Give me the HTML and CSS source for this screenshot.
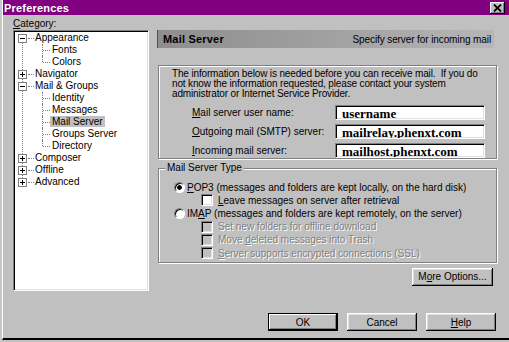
FILE: index.html
```html
<!DOCTYPE html>
<html>
<head>
<meta charset="utf-8">
<title>Preferences</title>
<link rel="stylesheet" href="styles.css">
</head>
<body>
<div class="win">
  <div class="frame">
    <div class="title">
      <span class="title-text">Preferences</span>
      <span class="close"><svg width="9" height="8" viewBox="0 0 9 8"><path d="M1 0.5 L8 7.5 M8 0.5 L1 7.5" stroke="#000" stroke-width="1.8" fill="none"/></svg></span>
    </div>
    <div class="main">
      <div class="left">
        <div class="cat"><u>C</u>ategory:</div>
        <div class="tree">
          <div class="roots">
            <div class="node"><span class="exp"></span><span class="dash"></span><span class="lbl">Appearance</span></div>
            <div class="kids">
              <div class="kid">Fonts</div>
              <div class="kid">Colors</div>
            </div>
            <div class="node"><span class="exp plus"></span><span class="dash"></span><span class="lbl">Navigator</span></div>
            <div class="node"><span class="exp"></span><span class="dash"></span><span class="lbl">Mail &amp; Groups</span></div>
            <div class="kids">
              <div class="kid">Identity</div>
              <div class="kid">Messages</div>
              <div class="kid"><span class="sel">Mail Server</span></div>
              <div class="kid">Groups Server</div>
              <div class="kid">Directory</div>
            </div>
            <div class="node"><span class="exp plus"></span><span class="dash"></span><span class="lbl">Composer</span></div>
            <div class="node"><span class="exp plus"></span><span class="dash"></span><span class="lbl">Offline</span></div>
            <div class="node"><span class="exp plus"></span><span class="dash"></span><span class="lbl">Advanced</span></div>
          </div>
        </div>
      </div>
      <div class="right">
        <div class="head"><b class="head-title">Mail Server</b><span class="head-sub">Specify server for incoming mail</span></div>
        <div class="group g1">
          <p class="info">The information below is needed before you can receive mail.&nbsp; If you do<br>not know the information requested, please contact your system<br>administrator or Internet Service Provider.</p>
          <div class="field"><span class="flabel"><u>M</u>ail server user name:</span><span class="input">username</span></div>
          <div class="field"><span class="flabel"><u>O</u>utgoing mail (SMTP) server:</span><span class="input">mailrelay.phenxt.com</span></div>
          <div class="field"><span class="flabel"><u>I</u>ncoming mail server:</span><span class="input">mailhost.phenxt.com</span></div>
        </div>
        <fieldset class="g2">
          <legend class="legend">Mail Server Type</legend>
          <div class="opts">
            <div class="opt"><span class="radio on"></span><span><u>P</u>OP3 (messages and folders are kept locally, on the hard disk)</span></div>
            <div class="opt sub"><span class="cb"></span><span><u>L</u>eave messages on server after retrieval</span></div>
            <div class="opt"><span class="radio"></span><span>IM<u>A</u>P (messages and folders are kept remotely, on the server)</span></div>
            <div class="opt sub dis"><span class="cb"></span><span>Set new folders for offline download</span></div>
            <div class="opt sub dis"><span class="cb"></span><span>Move <u>d</u>eleted messages into Trash</span></div>
            <div class="opt sub dis"><span class="cb"></span><span><u>S</u>erver supports encrypted connections (SSL)</span></div>
          </div>
        </fieldset>
        <div class="more-row"><button class="btn more">M<u>o</u>re Options...</button></div>
      </div>
    </div>
    <div class="footer">
      <button class="btn def">OK</button>
      <button class="btn">Cancel</button>
      <button class="btn"><u>H</u>elp</button>
    </div>
  </div>
</div>
</body>
</html>
```

FILE: styles.css
```css
* { box-sizing: border-box; }
html, body { margin: 0; padding: 0; background: #c0c0c0; }
body { font-family: "Liberation Sans", Arial, sans-serif; font-size: 10px; color: #000; }

.win { width: 509px; height: 342px; background: #c0c0c0; border-left: 2px solid #c8c8c8; overflow: hidden; }
.frame { height: 340px; border-bottom: 2px solid #000; border-left: 1px solid #fff; display: flex; flex-direction: column; }

.title { height: 15px; flex: none; background: #800080; display: flex; align-items: center; justify-content: space-between; padding: 0 4px 0 1px; }
.title-text { color: #fff; font-weight: bold; font-size: 11px; letter-spacing: 0.2px; }
.close { width: 15px; height: 12px; background: #c0c0c0; display: flex; align-items: center; justify-content: center;
  box-shadow: inset -1px -1px #000, inset 1px 1px #fff, inset -2px -2px #808080; }

.main { display: flex; gap: 8px; padding: 3px 0 0 10px; height: 276px; flex: none; }
.left { width: 136px; flex: none; }
.cat { height: 12px; line-height: 12px; }
.tree { height: 261px; background: #fff; border: 1px solid; border-color: #808080 #fff #fff #808080;
  box-shadow: inset 1px 1px #000, inset -1px -1px #dfdfdf; padding: 1px 0 0 1px; }
.roots { position: relative; }
.roots::before { content: ""; position: absolute; left: 7px; top: 6px; bottom: 6px; border-left: 1px dotted #808080; }
.node { display: flex; align-items: center; height: 12px; line-height: 12px; padding-left: 3px; position: relative; white-space: nowrap; }
.exp { width: 9px; height: 9px; border: 1px solid #808080; background: #fff; position: relative; flex: none; }
.exp::before { content: ""; position: absolute; left: 1px; right: 1px; top: 3px; height: 1px; background: #000; }
.exp.plus::after { content: ""; position: absolute; top: 1px; bottom: 1px; left: 3px; width: 1px; background: #000; }
.dash { width: 6px; border-top: 1px dotted #808080; margin: 0 1px; flex: none; }
.kid { height: 12px; line-height: 12px; padding-left: 37px; position: relative; white-space: nowrap; }
.kid::before { content: ""; position: absolute; left: 27px; top: 0; bottom: 0; border-left: 1px dotted #808080; }
.kid:last-child::before { bottom: 6px; }
.kid::after { content: ""; position: absolute; left: 28px; top: 6px; width: 7px; border-top: 1px dotted #808080; }
.sel { background: #c0c0c0; padding: 0 2px; margin-left: -2px; }

.right { width: 340px; flex: none; padding-top: 12px; display: flex; flex-direction: column; }
.head { height: 18px; flex: none; margin-right: 3px; display: flex; align-items: center; justify-content: space-between;
  padding: 0 3px 0 5px; background: linear-gradient(90deg, #8e8e8e 0%, #a0a0a0 50%, #b6b6b6 100%); border-left: 1px solid #505050; }
.head-title { font-size: 11px; letter-spacing: 0.2px; }
.head-sub { letter-spacing: -0.1px; }

.group { border: 1px solid #808080; box-shadow: inset 1px 1px #fff, 1px 1px #fff; }
.g1 { margin: 17px 0 0 1px; padding: 3px 11px 0 13px; }
.info { margin: 0; line-height: 10px; white-space: nowrap; letter-spacing: -0.15px; }
.field { display: flex; align-items: center; height: 15px; margin-top: 4px; }
.info + .field { margin-top: 6px; }
.flabel { margin-left: 20px; }
.input { margin-left: auto; width: 150px; height: 15px; background: #fff; border: 1px solid; border-color: #808080 #fff #fff #808080;
  box-shadow: inset 1px 1px #000, inset -1px -1px #dfdfdf; font-family: "Liberation Serif", "Times New Roman", serif;
  font-weight: bold; font-size: 13px; line-height: 12px; padding: 2px 0 0 6px; white-space: nowrap; overflow: hidden; }

.g2 { margin: 3px 0 0 1px; padding: 0 0 2px 15px; border: 1px solid #808080; box-shadow: inset 1px 1px #fff, 1px 1px #fff; min-width: 0; }
.legend { margin-left: -9px; padding: 0 2px; line-height: 12px; background: #c0c0c0; }
.opts { padding-top: 6.5px; }
.opt { display: flex; align-items: center; height: 13.2px; white-space: nowrap; }
.opt.sub { padding-left: 27px; }
.radio { width: 11px; height: 11px; border-radius: 50%; margin-right: 2px; flex: none; border: 1px solid; border-color: #808080 #fff #fff #808080;
  background: #fff; box-shadow: inset 1px 1px #000; }
.radio.on { background: radial-gradient(circle, #000 0 2px, #fff 2.6px); }
.cb { width: 12px; height: 12px; margin-right: 5px; flex: none; background: #fff; border: 1px solid; border-color: #808080 #fff #fff #808080;
  box-shadow: inset 1px 1px #000, inset -1px -1px #dfdfdf; }
.dis { color: #808080; text-shadow: 1px 1px 0 #fff; }
.dis .cb { background: #c0c0c0; }

.more-row { display: flex; justify-content: flex-end; margin-top: 5px; padding-right: 4px; }
.btn { width: 70px; height: 18px; padding: 0; border: 0; background: #c0c0c0; color: #000; font-family: "Liberation Sans", Arial, sans-serif;
  font-size: 10px; box-shadow: inset -1px -1px #000, inset 1px 1px #fff, inset -2px -2px #808080, inset 2px 2px #dfdfdf; }
.btn.more { width: 81px; }
.btn.def { box-shadow: inset 0 0 0 1px #000, inset -2px -2px #000, inset 2px 2px #fff, inset -3px -3px #808080; }

.footer { display: flex; justify-content: flex-end; gap: 9px; margin-top: 22px; padding-right: 13px; }
```
